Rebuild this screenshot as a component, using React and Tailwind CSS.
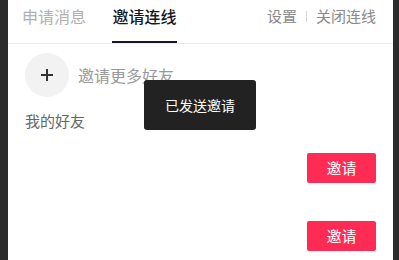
import React from 'react';

const font = { fontFamily: '"Noto Sans CJK SC", "Noto Sans", sans-serif' };

function App() {
    const friends = [1, 2];
    return (
        <div className="flex h-[260px] w-[399px] overflow-hidden bg-[#2b2b2b]" style={font}>
            <div className="relative ml-[8px] flex h-full w-[385px] flex-col bg-white">
                <header className="flex h-[44px] items-start border-b border-[#ececec] pl-[14px] pr-[17px]">
                    <div className="pt-[5px] text-[16px] leading-[22px] text-[#b0b0b0]">申请消息</div>
                    <div className="ml-[26px] flex h-[44px] flex-col items-center justify-between pt-[5px]">
                        <span className="text-[16px] leading-[22px] font-medium text-[#161823]">邀请连线</span>
                        <span className="mb-[1px] h-[2px] w-[65px] bg-[#161823]" />
                    </div>
                    <div className="ml-auto flex items-center pt-[5px] text-[15px] leading-[22px] text-[#8a8a8a]">
                        <span>设置</span>
                        <span className="mx-[9px] h-[11px] w-px bg-[#d8d8d8]" />
                        <span>关闭连线</span>
                    </div>
                </header>
                <div className="mt-[9px] flex items-center pl-[17px]">
                    <div className="flex h-[44px] w-[44px] items-center justify-center rounded-full bg-[#f2f2f2]">
                        <svg width="14" height="14" viewBox="0 0 14 14">
                            <path d="M7 1v12M1 7h12" stroke="#333" strokeWidth="2" />
                        </svg>
                    </div>
                    <span className="ml-[9px] text-[16px] text-[#999]">邀请更多好友</span>
                </div>
                <div className="mt-[14px] pl-[17px] text-[15px] leading-[20px] text-[#666]">我的好友</div>
                <div className="flex flex-col gap-[38px] pr-[17px] pt-[22px]">
                    {friends.map((f) => (
                        <div key={f} className="flex justify-end">
                            <button className="flex h-[30px] w-[69px] items-center justify-center rounded-[2px] bg-[#fe2c55] text-[15px] text-white">
                                邀请
                            </button>
                        </div>
                    ))}
                </div>
                <div className="absolute left-[136px] top-[80px] flex h-[50px] w-[112px] items-center justify-center rounded-[3px] bg-[#222] text-[14px] text-white">
                    已发送邀请
                </div>
            </div>
        </div>
    );
}

export default App;
